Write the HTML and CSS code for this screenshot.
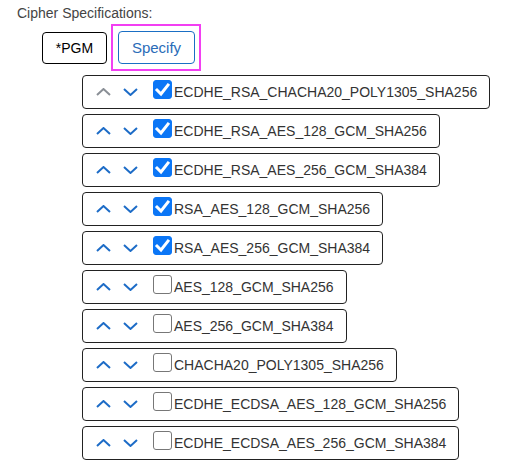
FILE: index.html
```html
<!DOCTYPE html>
<html>
<head>
<meta charset="utf-8">
<link rel="stylesheet" href="styles.css">
</head>
<body>
<div class="page">
  <div class="title">Cipher Specifications:</div>
  <div class="buttons">
    <button class="btn btn-pgm">*PGM</button>
    <span class="focus-ring"><button class="btn btn-specify">Specify</button></span>
  </div>
  <div class="list">
    <div class="row">
      <svg class="arrow disabled" viewBox="0 0 15 8"><polyline points="1,7 7.5,1 14,7"/></svg>
      <svg class="arrow" viewBox="0 0 15 8"><polyline points="1,1 7.5,7 14,1"/></svg>
      <span class="cb checked"><svg viewBox="0 0 19 19"><polyline points="4,10 8,14 15,5"/></svg></span>
      <span class="label">ECDHE_RSA_CHACHA20_POLY1305_SHA256</span>
    </div>
    <div class="row">
      <svg class="arrow" viewBox="0 0 15 8"><polyline points="1,7 7.5,1 14,7"/></svg>
      <svg class="arrow" viewBox="0 0 15 8"><polyline points="1,1 7.5,7 14,1"/></svg>
      <span class="cb checked"><svg viewBox="0 0 19 19"><polyline points="4,10 8,14 15,5"/></svg></span>
      <span class="label">ECDHE_RSA_AES_128_GCM_SHA256</span>
    </div>
    <div class="row">
      <svg class="arrow" viewBox="0 0 15 8"><polyline points="1,7 7.5,1 14,7"/></svg>
      <svg class="arrow" viewBox="0 0 15 8"><polyline points="1,1 7.5,7 14,1"/></svg>
      <span class="cb checked"><svg viewBox="0 0 19 19"><polyline points="4,10 8,14 15,5"/></svg></span>
      <span class="label">ECDHE_RSA_AES_256_GCM_SHA384</span>
    </div>
    <div class="row">
      <svg class="arrow" viewBox="0 0 15 8"><polyline points="1,7 7.5,1 14,7"/></svg>
      <svg class="arrow" viewBox="0 0 15 8"><polyline points="1,1 7.5,7 14,1"/></svg>
      <span class="cb checked"><svg viewBox="0 0 19 19"><polyline points="4,10 8,14 15,5"/></svg></span>
      <span class="label">RSA_AES_128_GCM_SHA256</span>
    </div>
    <div class="row">
      <svg class="arrow" viewBox="0 0 15 8"><polyline points="1,7 7.5,1 14,7"/></svg>
      <svg class="arrow" viewBox="0 0 15 8"><polyline points="1,1 7.5,7 14,1"/></svg>
      <span class="cb checked"><svg viewBox="0 0 19 19"><polyline points="4,10 8,14 15,5"/></svg></span>
      <span class="label">RSA_AES_256_GCM_SHA384</span>
    </div>
    <div class="row">
      <svg class="arrow" viewBox="0 0 15 8"><polyline points="1,7 7.5,1 14,7"/></svg>
      <svg class="arrow" viewBox="0 0 15 8"><polyline points="1,1 7.5,7 14,1"/></svg>
      <span class="cb"></span>
      <span class="label">AES_128_GCM_SHA256</span>
    </div>
    <div class="row">
      <svg class="arrow" viewBox="0 0 15 8"><polyline points="1,7 7.5,1 14,7"/></svg>
      <svg class="arrow" viewBox="0 0 15 8"><polyline points="1,1 7.5,7 14,1"/></svg>
      <span class="cb"></span>
      <span class="label">AES_256_GCM_SHA384</span>
    </div>
    <div class="row">
      <svg class="arrow" viewBox="0 0 15 8"><polyline points="1,7 7.5,1 14,7"/></svg>
      <svg class="arrow" viewBox="0 0 15 8"><polyline points="1,1 7.5,7 14,1"/></svg>
      <span class="cb"></span>
      <span class="label">CHACHA20_POLY1305_SHA256</span>
    </div>
    <div class="row">
      <svg class="arrow" viewBox="0 0 15 8"><polyline points="1,7 7.5,1 14,7"/></svg>
      <svg class="arrow" viewBox="0 0 15 8"><polyline points="1,1 7.5,7 14,1"/></svg>
      <span class="cb"></span>
      <span class="label">ECDHE_ECDSA_AES_128_GCM_SHA256</span>
    </div>
    <div class="row">
      <svg class="arrow" viewBox="0 0 15 8"><polyline points="1,7 7.5,1 14,7"/></svg>
      <svg class="arrow" viewBox="0 0 15 8"><polyline points="1,1 7.5,7 14,1"/></svg>
      <span class="cb"></span>
      <span class="label">ECDHE_ECDSA_AES_256_GCM_SHA384</span>
    </div>
  </div>
</div>
</body>
</html>
```

FILE: styles.css
```css
html, body {
  margin: 0;
  padding: 0;
  background: #fff;
}
body {
  font-family: "Liberation Sans", Arial, sans-serif;
  font-size: 14px;
  color: #333;
}
.page {
  padding: 5px 0 0 17px;
}
.title {
  color: #444;
  line-height: 16px;
  height: 16px;
}
.buttons {
  display: flex;
  align-items: flex-start;
  gap: 4px;
  margin: 3px 0 0 25px;
}
.btn {
  font-family: inherit;
  font-size: 14px;
  background: #fff;
  border-radius: 4px;
  margin: 0;
  padding: 0;
  cursor: pointer;
}
.btn-pgm {
  width: 65px;
  height: 32px;
  margin-top: 8px;
  border: 1px solid #000;
  color: #000;
}
.focus-ring {
  display: flex;
  border: 2px solid #f23ff2;
  padding: 5px 4px 5px 5px;
}
.btn-specify {
  width: 77px;
  height: 33px;
  font-size: 15px;
  border: 1px solid #1a6fc4;
  color: #2a6cb8;
  outline: none;
}
.list {
  display: flex;
  flex-direction: column;
  align-items: flex-start;
  gap: 5px;
  margin: 4px 0 0 65px;
}
.row {
  display: flex;
  align-items: center;
  height: 32px;
  border: 1px solid #222;
  border-radius: 4px;
  padding: 0 12px 0 13px;
}
.arrow {
  width: 15px;
  height: 8px;
  fill: none;
  stroke: #1d6cc7;
  stroke-width: 2;
  margin-right: 12px;
}
.arrow + .arrow {
  margin-right: 15px;
}
.arrow.disabled {
  stroke: #8a8f96;
}
.cb {
  box-sizing: border-box;
  width: 19px;
  height: 19px;
  border: 1px solid #777;
  border-radius: 3px;
  margin: 0 2px 5px 0;
  display: flex;
  background: #fff;
}
.cb.checked {
  background: #0b76f6;
  border-color: #0b76f6;
}
.cb svg {
  width: 19px;
  height: 19px;
  margin: -1px;
  fill: none;
  stroke: #fff;
  stroke-width: 3;
  stroke-linecap: square;
}
.label {
  line-height: 16px;
  white-space: nowrap;
}
```
